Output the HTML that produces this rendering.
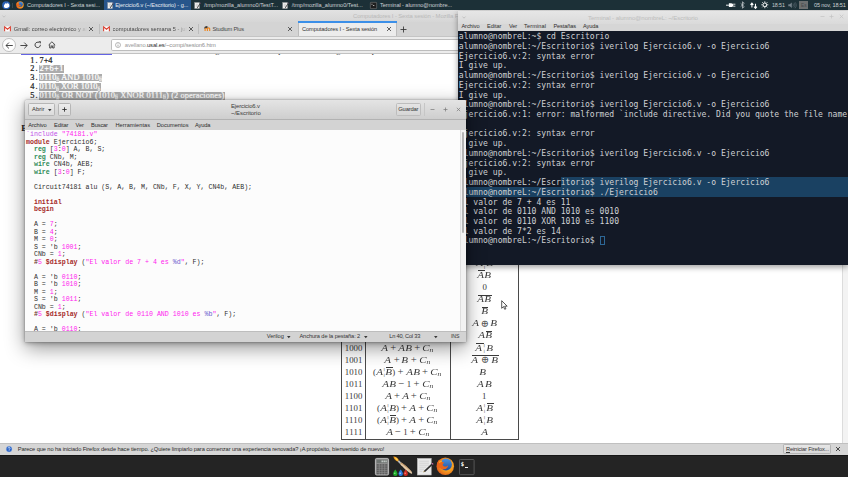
<!DOCTYPE html>
<html lang="es">
<head>
<meta charset="utf-8">
<title>Escritorio</title>
<style>
*{box-sizing:border-box;margin:0;padding:0}
html,body{width:848px;height:477px;overflow:hidden;background:#fff}
body{position:relative;font-family:"Liberation Sans","DejaVu Sans",sans-serif;font-size:6px;color:#333}
.abs{position:absolute}
span,div{white-space:nowrap}
svg{display:block;overflow:visible}
#panel{left:0;top:0;width:848px;height:10.2px;background:#1c3037}
.fade{-webkit-mask-image:linear-gradient(90deg,#000 82%,transparent 100%);mask-image:linear-gradient(90deg,#000 82%,transparent 100%)}
#termtxt{font-family:"DejaVu Sans Mono","Liberation Mono",monospace;font-size:8.07px;line-height:9.73px;color:#cfd1d4}
#termtxt div{height:9.73px;white-space:pre}

.hle{display:inline-block;width:287.3px;height:9.73px;vertical-align:top}
.cur{display:inline-block;width:5px;height:9.3px;border:.8px solid #2d6796;vertical-align:top;margin-top:-.6px}
#gcode{overflow:hidden;padding:.3px 0 0 1.2px;font-family:"Liberation Mono","DejaVu Sans Mono",monospace;font-size:6.62px;line-height:7.52px;color:#2e2e2e;background:#fcfcfc}
#gcode div{height:7.52px;white-space:pre}
.k{color:#a52a2a}.ty{color:#2e8b57}.n,.s{color:#ff22ee}.p{color:#6a5acd}.pp{color:#c050e8}.h{color:#6b3a2a}
.mth{word-spacing:-.3px}
.mth i{font-style:italic;display:inline-block;transform:scaleX(1.26);margin:0 .68px}
.op{font-size:10.6px;line-height:0;position:relative;top:.55px}
.op2{font-size:9.8px;line-height:0;position:relative;top:.35px;color:#555}
.sn{font-size:6px;vertical-align:-1.6px;line-height:0}
.bb{color:#777;font-style:normal;position:relative;top:.3px;font-size:9.6px;line-height:0}
.ov{position:relative;display:inline-block;line-height:9px}
.ov::before{content:"";position:absolute;left:.6px;right:-.4px;top:-.9px;height:.6px;background:#3a3a3a}
</style>
</head>
<body>
<div class="abs " style="left:0.00px;top:10.00px;width:848.00px;height:12.00px;background:linear-gradient(#e2e2e2,#d6d6d6)"></div><svg class="abs" style="left:2.30px;top:14.80px;" width="4.00" height="3.00" viewBox="0 0 4 3"><path d="M.5 .6 2 2.200 3.500 .6" fill="none" stroke="#b9b9b9" stroke-width=".7"/></svg><span id="t1" class="abs " style="left:353.00px;top:12.86px;font-size:5.90px;line-height:7.67px;height:7.67px;color:#b9b9b9;letter-spacing:-0.110px;">Computadores I - Sexta sesión - Mozilla Firefox</span><div class="abs " style="left:0.00px;top:21.50px;width:848.00px;height:14.20px;background:#d4d4d4"></div><svg class="abs" style="left:3.80px;top:26.20px;" width="7.00" height="5.60" viewBox="0 0 10 8"><rect x=".3" y=".3" width="9.400" height="7.400" rx=".6" fill="#fff" stroke="#d9d3d0" stroke-width=".4"/><path d="M.9 7.600V1.200L5 4.600 9.100 1.200V7.600" fill="none" stroke="#d93a2b" stroke-width="1.500" stroke-linejoin="miter"/></svg><span id="t2" class="abs fade" style="left:13.80px;top:25.99px;font-size:5.70px;line-height:7.41px;height:7.41px;color:#464646;letter-spacing:-0.023px;">Gmail: correo electrónico y al</span><svg class="abs" style="left:88.40px;top:26.10px;" width="6.00" height="6.00" viewBox="0 0 6 6"><path d="M1 1 L5 5 M5 1 L1 5" stroke="#3c3c3c" stroke-width="0.8"/></svg><div class="abs " style="left:99.20px;top:23.60px;width:0.70px;height:10.40px;background:#bdbdbd"></div><svg class="abs" style="left:103.40px;top:26.20px;" width="7.00" height="5.60" viewBox="0 0 10 8"><rect x=".3" y=".3" width="9.400" height="7.400" rx=".6" fill="#fff" stroke="#d9d3d0" stroke-width=".4"/><path d="M.9 7.600V1.200L5 4.600 9.100 1.200V7.600" fill="none" stroke="#d93a2b" stroke-width="1.500" stroke-linejoin="miter"/></svg><span id="t3" class="abs fade" style="left:112.60px;top:25.99px;font-size:5.70px;line-height:7.41px;height:7.41px;color:#464646;letter-spacing:0.033px;">computadores semana 5 - jul</span><svg class="abs" style="left:187.80px;top:26.10px;" width="6.00" height="6.00" viewBox="0 0 6 6"><path d="M1 1 L5 5 M5 1 L1 5" stroke="#3c3c3c" stroke-width="0.8"/></svg><div class="abs " style="left:198.30px;top:23.60px;width:0.70px;height:10.40px;background:#bdbdbd"></div><svg class="abs" style="left:203.60px;top:26.30px;" width="6.80" height="5.40" viewBox="0 0 6.800 5.400"><path d="M1.100 5V3a1.150 1.150 0 0 1 2.300 0V5M3.400 3a1.150 1.150 0 0 1 2.300 0V5" fill="none" stroke="#f0861c" stroke-width="1.150"/><path d="M0 1.300 2.300 .1 4.300 1 2.100 2.300Z" fill="#3d3630"/><path d="M.5 1.500V3" stroke="#3d3630" stroke-width=".4"/></svg><span id="t4" class="abs " style="left:212.50px;top:25.99px;font-size:5.70px;line-height:7.41px;height:7.41px;color:#464646;letter-spacing:-0.183px;">Studium Plus</span><svg class="abs" style="left:287.00px;top:26.10px;" width="6.00" height="6.00" viewBox="0 0 6 6"><path d="M1 1 L5 5 M5 1 L1 5" stroke="#3c3c3c" stroke-width="0.8"/></svg><div class="abs " style="left:0.00px;top:35.60px;width:848.00px;height:18.00px;background:#ececec;border-top:.6px solid #c4c4c4;border-bottom:.8px solid #c2c2c2"></div><div class="abs " style="left:297.80px;top:21.50px;width:99.20px;height:14.80px;background:#ececec;border-left:.6px solid #bcbcbc;border-right:.6px solid #bcbcbc"></div><div class="abs " style="left:297.80px;top:21.40px;width:99.20px;height:1.50px;background:#3b8fe8"></div><span id="t5" class="abs " style="left:302.00px;top:25.99px;font-size:5.70px;line-height:7.41px;height:7.41px;color:#333;letter-spacing:-0.103px;">Computadores I - Sexta sesión</span><svg class="abs" style="left:386.00px;top:26.10px;" width="6.00" height="6.00" viewBox="0 0 6 6"><path d="M1 1 L5 5 M5 1 L1 5" stroke="#3c3c3c" stroke-width="0.8"/></svg><svg class="abs" style="left:400.20px;top:25.60px;" width="7.00" height="7.00" viewBox="0 0 7 7"><path d="M3.500 .5V6.500M.5 3.500H6.500" stroke="#333" stroke-width=".85"/></svg><div class="abs " style="left:1.80px;top:37.90px;width:14.20px;height:14.20px;background:#fdfdfd;border:.7px solid #c0c0c0;border-radius:50%"></div><svg class="abs" style="left:4.80px;top:41.50px;" width="8.20" height="7.00" viewBox="0 0 8.2 7"><path d="M7.800 3.500H1M3.900 .6 1 3.500 3.900 6.400" fill="none" stroke="#3e3e3e" stroke-width=".95"/></svg><svg class="abs" style="left:19.80px;top:41.50px;" width="8.20" height="7.00" viewBox="0 0 8.2 7"><path d="M.4 3.500H7.200M4.300 .6 7.200 3.500 4.300 6.400" fill="none" stroke="#3e3e3e" stroke-width=".95"/></svg><svg class="abs" style="left:34.00px;top:41.30px;" width="7.60" height="7.60" viewBox="0 0 7.6 7.6"><path d="M6.400 3.800A2.700 2.700 0 1 1 5.300 1.700" fill="none" stroke="#3e3e3e" stroke-width=".95"/><path d="M4.300 .2H6.800V2.700Z" fill="#3e3e3e"/></svg><svg class="abs" style="left:47.80px;top:41.20px;" width="7.80" height="7.60" viewBox="0 0 7.8 7.6"><path d="M.6 4 3.900 .8 7.200 4M1.700 3.400V7H3.200V4.900H4.600V7H6.100V3.400" fill="none" stroke="#3e3e3e" stroke-width=".9"/></svg><div class="abs " style="left:110.50px;top:38.90px;width:600.00px;height:12.50px;background:#fff;border:.7px solid #bdbdbd;border-radius:1.800px"></div><svg class="abs" style="left:114.60px;top:42.00px;" width="6.00" height="6.00" viewBox="0 0 6 6"><circle cx="3" cy="3" r="2.500" fill="none" stroke="#8a8a8a" stroke-width=".6"/><path d="M3 2.600V4.500M3 1.500V2" stroke="#8a8a8a" stroke-width=".7"/></svg><span id="t6" class="abs " style="left:124.80px;top:41.93px;font-size:5.80px;line-height:7.54px;height:7.54px;letter-spacing:-0.112px;"><span style="color:#9a9a9a">avellano.</span><span style="color:#2a2a2a">usal.es</span><span style="color:#8e8e8e">/~compi/sesion6.htm</span></span>
<div class="abs " style="left:0.00px;top:53.60px;width:848.00px;height:389.20px;background:#fff"></div><div class="abs" style="left:0;top:54.200px;width:848px;height:5px;overflow:hidden"><span id="t7" class="abs " style="left:215.30px;top:-7.90px;font-size:8.30px;line-height:9.20px;height:9.20px;color:#222;font-family:'Liberation Serif','DejaVu Serif',serif;">general</span><span id="t8" class="abs " style="left:278.20px;top:-7.90px;font-size:8.30px;line-height:9.20px;height:9.20px;color:#222;font-family:'Liberation Serif','DejaVu Serif',serif;">para</span><span id="t9" class="abs " style="left:336.30px;top:-7.90px;font-size:8.30px;line-height:9.20px;height:9.20px;color:#222;font-family:'Liberation Serif','DejaVu Serif',serif;">grandes</span><span id="t10" class="abs " style="left:371.70px;top:-7.90px;font-size:8.30px;line-height:9.20px;height:9.20px;color:#222;font-family:'Liberation Serif','DejaVu Serif',serif;">paso</span></div><div class="abs " style="left:21.00px;top:53.80px;width:90.60px;height:1.00px;background:#6464e4"></div><span id="t11" class="abs " style="left:30.30px;top:56.50px;font-size:8.30px;line-height:8.00px;height:8.00px;color:#222;font-family:'Liberation Serif','DejaVu Serif',serif;letter-spacing:1.066px;-webkit-text-stroke:.22px;">1.</span><span id="t12" class="abs " style="left:39.30px;top:56.50px;font-size:8.30px;line-height:8.00px;height:8.00px;color:#1a1a1a;font-family:'Liberation Serif','DejaVu Serif',serif;letter-spacing:-0.039px;"><span style="display:inline-block;height:7.900px;line-height:7.900px;padding:0 .3px;-webkit-text-stroke:.22px;">7+4</span></span><span id="t13" class="abs " style="left:30.30px;top:65.00px;font-size:8.30px;line-height:8.00px;height:8.00px;color:#222;font-family:'Liberation Serif','DejaVu Serif',serif;letter-spacing:1.066px;-webkit-text-stroke:.22px;">2.</span><span id="t14" class="abs " style="left:39.30px;top:65.00px;font-size:8.30px;line-height:8.00px;height:8.00px;color:#1a1a1a;font-family:'Liberation Serif','DejaVu Serif',serif;letter-spacing:0.498px;"><span style="display:inline-block;height:7.900px;line-height:7.900px;padding:0 .3px;-webkit-text-stroke:.22px;background:#acacac;color:#fff">2+6+1</span></span><span id="t15" class="abs " style="left:30.30px;top:73.50px;font-size:8.30px;line-height:8.00px;height:8.00px;color:#222;font-family:'Liberation Serif','DejaVu Serif',serif;letter-spacing:1.066px;-webkit-text-stroke:.22px;">3.</span><span id="t16" class="abs " style="left:39.30px;top:73.50px;font-size:8.30px;line-height:8.00px;height:8.00px;color:#1a1a1a;font-family:'Liberation Serif','DejaVu Serif',serif;letter-spacing:0.138px;"><span style="display:inline-block;height:7.900px;line-height:7.900px;padding:0 .3px;-webkit-text-stroke:.22px;background:#acacac;color:#fff">0110<sub style="font-size:5.800px;vertical-align:-1.500px;line-height:0;background:#c6c6c6;-webkit-text-stroke:0">b</sub> AND 1010<sub style="font-size:5.800px;vertical-align:-1.500px;line-height:0;background:#c6c6c6;-webkit-text-stroke:0">b</sub></span></span><span id="t17" class="abs " style="left:30.30px;top:83.40px;font-size:8.30px;line-height:8.00px;height:8.00px;color:#222;font-family:'Liberation Serif','DejaVu Serif',serif;letter-spacing:1.066px;-webkit-text-stroke:.22px;">4.</span><span id="t18" class="abs " style="left:39.30px;top:83.40px;font-size:8.30px;line-height:8.00px;height:8.00px;color:#1a1a1a;font-family:'Liberation Serif','DejaVu Serif',serif;letter-spacing:0.031px;"><span style="display:inline-block;height:7.900px;line-height:7.900px;padding:0 .3px;-webkit-text-stroke:.22px;background:#acacac;color:#fff">0110<sub style="font-size:5.800px;vertical-align:-1.500px;line-height:0;background:#c6c6c6;-webkit-text-stroke:0">b</sub> XOR 1010<sub style="font-size:5.800px;vertical-align:-1.500px;line-height:0;background:#c6c6c6;-webkit-text-stroke:0">b</sub></span></span><span id="t19" class="abs " style="left:30.30px;top:91.90px;font-size:8.30px;line-height:8.00px;height:8.00px;color:#222;font-family:'Liberation Serif','DejaVu Serif',serif;letter-spacing:1.066px;-webkit-text-stroke:.22px;">5.</span><span id="t20" class="abs " style="left:39.30px;top:91.90px;font-size:8.30px;line-height:8.00px;height:8.00px;color:#1a1a1a;font-family:'Liberation Serif','DejaVu Serif',serif;letter-spacing:0.126px;"><span style="display:inline-block;height:7.900px;line-height:7.900px;padding:0 .3px;-webkit-text-stroke:.22px;background:#acacac;color:#fff">0110<sub style="font-size:5.800px;vertical-align:-1.500px;line-height:0;background:#c6c6c6;-webkit-text-stroke:0">b</sub> OR NOT (1010<sub style="font-size:5.800px;vertical-align:-1.500px;line-height:0;background:#c6c6c6;-webkit-text-stroke:0">b</sub> XNOR 0111<sub style="font-size:5.800px;vertical-align:-1.500px;line-height:0;background:#c6c6c6;-webkit-text-stroke:0">b</sub>) (2 operaciones)</span></span><span id="t21" class="abs " style="left:21.20px;top:123.18px;font-size:8.80px;line-height:11.44px;height:11.44px;color:#222;font-family:'Liberation Serif','DejaVu Serif',serif;font-weight:bold;letter-spacing:0.066px;">Ejercicio 6</span><div class="abs " style="left:841.60px;top:53.60px;width:6.40px;height:389.20px;background:#f3f3f3;border-left:.7px solid #dcdcdc"></div>
<div class="abs " style="left:341.40px;top:200.00px;width:0.75px;height:239.40px;background:#4a4a4a"></div><div class="abs " style="left:365.40px;top:200.00px;width:0.75px;height:239.40px;background:#4a4a4a"></div><div class="abs " style="left:450.10px;top:200.00px;width:0.75px;height:239.40px;background:#4a4a4a"></div><div class="abs " style="left:518.20px;top:200.00px;width:0.75px;height:239.40px;background:#4a4a4a"></div><div class="abs " style="left:341.40px;top:438.70px;width:177.50px;height:0.75px;background:#4a4a4a"></div><span id="t22" class="abs " style="left:344.80px;top:343.50px;font-size:8.80px;line-height:9.00px;height:9.00px;color:#3a3a3a;font-family:'Liberation Serif','DejaVu Serif',serif;letter-spacing:-0.031px;">1000</span><span id="t23" class="abs " style="left:344.80px;top:355.52px;font-size:8.80px;line-height:9.00px;height:9.00px;color:#3a3a3a;font-family:'Liberation Serif','DejaVu Serif',serif;letter-spacing:-0.031px;">1001</span><span id="t24" class="abs " style="left:344.80px;top:367.54px;font-size:8.80px;line-height:9.00px;height:9.00px;color:#3a3a3a;font-family:'Liberation Serif','DejaVu Serif',serif;letter-spacing:-0.031px;">1010</span><span id="t25" class="abs " style="left:344.80px;top:379.56px;font-size:8.80px;line-height:9.00px;height:9.00px;color:#3a3a3a;font-family:'Liberation Serif','DejaVu Serif',serif;letter-spacing:0.073px;">1011</span><span id="t26" class="abs " style="left:344.80px;top:391.58px;font-size:8.80px;line-height:9.00px;height:9.00px;color:#3a3a3a;font-family:'Liberation Serif','DejaVu Serif',serif;letter-spacing:0.073px;">1100</span><span id="t27" class="abs " style="left:344.80px;top:403.60px;font-size:8.80px;line-height:9.00px;height:9.00px;color:#3a3a3a;font-family:'Liberation Serif','DejaVu Serif',serif;letter-spacing:0.073px;">1101</span><span id="t28" class="abs " style="left:344.80px;top:415.62px;font-size:8.80px;line-height:9.00px;height:9.00px;color:#3a3a3a;font-family:'Liberation Serif','DejaVu Serif',serif;letter-spacing:0.182px;">1110</span><span id="t29" class="abs " style="left:344.80px;top:427.64px;font-size:8.80px;line-height:9.00px;height:9.00px;color:#3a3a3a;font-family:'Liberation Serif','DejaVu Serif',serif;letter-spacing:0.292px;">1111</span><span id="t30" class="abs mth" style="left:381.30px;top:343.50px;font-size:8.80px;line-height:9.00px;height:9.00px;color:#3a3a3a;font-family:'Liberation Serif','DejaVu Serif',serif;letter-spacing:0.139px;"><i>A</i> <span class="op">+</span> <i>A</i><i>B</i> <span class="op">+</span> <i>C</i><sub class="sn"><i>n</i></sub></span><span id="t31" class="abs mth" style="left:384.80px;top:355.52px;font-size:8.80px;line-height:9.00px;height:9.00px;color:#3a3a3a;font-family:'Liberation Serif','DejaVu Serif',serif;letter-spacing:0.123px;"><i>A</i> <span class="op">+</span> <i>B</i> <span class="op">+</span> <i>C</i><sub class="sn"><i>n</i></sub></span><span id="t32" class="abs mth" style="left:373.00px;top:367.54px;font-size:8.80px;line-height:9.00px;height:9.00px;color:#3a3a3a;font-family:'Liberation Serif','DejaVu Serif',serif;letter-spacing:0.227px;">(<i>A</i><span class="bb">¦</span><span class="ov"><i>B</i></span>) <span class="op">+</span> <i>A</i><i>B</i> <span class="op">+</span> <i>C</i><sub class="sn"><i>n</i></sub></span><span id="t33" class="abs mth" style="left:382.40px;top:379.56px;font-size:8.80px;line-height:9.00px;height:9.00px;color:#3a3a3a;font-family:'Liberation Serif','DejaVu Serif',serif;letter-spacing:0.222px;"><i>A</i><i>B</i> <span class="op">−</span> 1 <span class="op">+</span> <i>C</i><sub class="sn"><i>n</i></sub></span><span id="t34" class="abs mth" style="left:385.20px;top:391.58px;font-size:8.80px;line-height:9.00px;height:9.00px;color:#3a3a3a;font-family:'Liberation Serif','DejaVu Serif',serif;letter-spacing:0.078px;"><i>A</i> <span class="op">+</span> <i>A</i> <span class="op">+</span> <i>C</i><sub class="sn"><i>n</i></sub></span><span id="t35" class="abs mth" style="left:377.00px;top:403.60px;font-size:8.80px;line-height:9.00px;height:9.00px;color:#3a3a3a;font-family:'Liberation Serif','DejaVu Serif',serif;letter-spacing:0.153px;">(<i>A</i><span class="bb">¦</span><i>B</i>) <span class="op">+</span> <i>A</i> <span class="op">+</span> <i>C</i><sub class="sn"><i>n</i></sub></span><span id="t36" class="abs mth" style="left:377.00px;top:415.62px;font-size:8.80px;line-height:9.00px;height:9.00px;color:#3a3a3a;font-family:'Liberation Serif','DejaVu Serif',serif;letter-spacing:0.153px;">(<i>A</i><span class="bb">¦</span><span class="ov"><i>B</i></span>) <span class="op">+</span> <i>A</i> <span class="op">+</span> <i>C</i><sub class="sn"><i>n</i></sub></span><span id="t37" class="abs mth" style="left:386.20px;top:427.64px;font-size:8.80px;line-height:9.00px;height:9.00px;color:#3a3a3a;font-family:'Liberation Serif','DejaVu Serif',serif;letter-spacing:0.126px;"><i>A</i> <span class="op">−</span> 1 <span class="op">+</span> <i>C</i><sub class="sn"><i>n</i></sub></span><span id="t38" class="abs mth" style="left:476.20px;top:259.36px;font-size:8.80px;line-height:9.00px;height:9.00px;color:#3a3a3a;font-family:'Liberation Serif','DejaVu Serif',serif;letter-spacing:0.570px;"><i>A</i><span class="bb">¦</span><span class="ov"><i>B</i></span></span><span id="t39" class="abs mth" style="left:477.70px;top:271.38px;font-size:8.80px;line-height:9.00px;height:9.00px;color:#3a3a3a;font-family:'Liberation Serif','DejaVu Serif',serif;letter-spacing:0.163px;"><span class="ov"><i>A</i></span><i>B</i></span><span id="t40" class="abs mth" style="left:482.50px;top:283.40px;font-size:8.80px;line-height:9.00px;height:9.00px;color:#3a3a3a;font-family:'Liberation Serif','DejaVu Serif',serif;">0</span><span id="t41" class="abs mth" style="left:477.70px;top:295.42px;font-size:8.80px;line-height:9.00px;height:9.00px;color:#3a3a3a;font-family:'Liberation Serif','DejaVu Serif',serif;letter-spacing:0.163px;"><span class="ov"><i>A</i><i>B</i></span></span><span id="t42" class="abs mth" style="left:481.00px;top:307.44px;font-size:8.80px;line-height:9.00px;height:9.00px;color:#3a3a3a;font-family:'Liberation Serif','DejaVu Serif',serif;"><span class="ov"><i>B</i></span></span><span id="t43" class="abs mth" style="left:472.00px;top:319.46px;font-size:8.80px;line-height:9.00px;height:9.00px;color:#3a3a3a;font-family:'Liberation Serif','DejaVu Serif',serif;letter-spacing:-0.117px;"><i>A</i> <span class="op2">⊕</span> <i>B</i></span><span id="t44" class="abs mth" style="left:478.30px;top:331.48px;font-size:8.80px;line-height:9.00px;height:9.00px;color:#3a3a3a;font-family:'Liberation Serif','DejaVu Serif',serif;letter-spacing:0.162px;"><i>A</i><span class="ov"><i>B</i></span></span><span id="t45" class="abs mth" style="left:475.80px;top:343.50px;font-size:8.80px;line-height:9.00px;height:9.00px;color:#3a3a3a;font-family:'Liberation Serif','DejaVu Serif',serif;letter-spacing:0.770px;"><span class="ov"><i>A</i></span><span class="bb">¦</span><i>B</i></span><span id="t46" class="abs mth" style="left:471.50px;top:355.52px;font-size:8.80px;line-height:9.00px;height:9.00px;color:#3a3a3a;font-family:'Liberation Serif','DejaVu Serif',serif;letter-spacing:0.258px;"><span class="ov"><i>A</i> <span class="op2">⊕</span> <i>B</i></span></span><span id="t47" class="abs mth" style="left:479.80px;top:367.54px;font-size:8.80px;line-height:9.00px;height:9.00px;color:#3a3a3a;font-family:'Liberation Serif','DejaVu Serif',serif;"><i>B</i></span><span id="t48" class="abs mth" style="left:477.40px;top:379.56px;font-size:8.80px;line-height:9.00px;height:9.00px;color:#3a3a3a;font-family:'Liberation Serif','DejaVu Serif',serif;letter-spacing:1.463px;"><i>A</i><i>B</i></span><span id="t49" class="abs mth" style="left:482.00px;top:391.58px;font-size:8.80px;line-height:9.00px;height:9.00px;color:#3a3a3a;font-family:'Liberation Serif','DejaVu Serif',serif;">1</span><span id="t50" class="abs mth" style="left:476.20px;top:403.60px;font-size:8.80px;line-height:9.00px;height:9.00px;color:#3a3a3a;font-family:'Liberation Serif','DejaVu Serif',serif;letter-spacing:0.570px;"><i>A</i><span class="bb">¦</span><span class="ov"><i>B</i></span></span><span id="t51" class="abs mth" style="left:476.20px;top:415.62px;font-size:8.80px;line-height:9.00px;height:9.00px;color:#3a3a3a;font-family:'Liberation Serif','DejaVu Serif',serif;letter-spacing:0.570px;"><i>A</i><span class="bb">¦</span><i>B</i></span><span id="t52" class="abs mth" style="left:481.00px;top:427.64px;font-size:8.80px;line-height:9.00px;height:9.00px;color:#3a3a3a;font-family:'Liberation Serif','DejaVu Serif',serif;"><i>A</i></span>
<div class="abs " style="left:0.00px;top:442.80px;width:848.00px;height:12.40px;background:#d6d6d6;border-top:.7px solid #c0c0c0"></div><svg class="abs" style="left:5.70px;top:446.00px;" width="6.20" height="6.20" viewBox="0 0 10 10"><circle cx="5" cy="5" r="4.700" fill="#2a64c8" stroke="#9cb8e6" stroke-width=".6"/><path d="M3.500 3.800C3.500 2.800 4.200 2.300 5 2.300s1.600.5 1.600 1.400c0 1.100-1.500 1.200-1.500 2.400M5.100 7.200v.9" fill="none" stroke="#fff" stroke-width="1.100"/></svg><span id="t53" class="abs " style="left:17.70px;top:445.90px;font-size:5.70px;line-height:7.41px;height:7.41px;color:#2b2b2b;letter-spacing:-0.090px;">Parece que no ha iniciado Firefox desde hace tiempo. ¿Quiere limpiarlo para comenzar una experiencia renovada? ¡A propósito, bienvenido de nuevo!</span><div class="abs " style="left:782.90px;top:444.40px;width:48.40px;height:9.40px;background:linear-gradient(#e6e6e6,#d9d9d9);border:.6px solid #b4b4b4;border-radius:1.200px"></div><span id="t54" class="abs " style="left:786.00px;top:445.90px;font-size:5.70px;line-height:7.41px;height:7.41px;color:#333;letter-spacing:-0.144px;"><u>R</u>einiciar Firefox...</span><svg class="abs" style="left:835.00px;top:446.20px;" width="6.00" height="6.00" viewBox="0 0 6 6"><path d="M1 1 L5 5 M5 1 L1 5" stroke="#2e2e2e" stroke-width="0.85"/></svg>
<svg class="abs" style="left:500.80px;top:300.30px;" width="7.00" height="10.00" viewBox="0 0 7 10"><path d="M.7 .7V8.300L2.500 6.600 3.700 9.300 4.900 8.800 3.700 6.200H6.200Z" fill="#fff" stroke="#111" stroke-width=".7" stroke-linejoin="round"/></svg>
<div class="abs " style="left:458.20px;top:11.10px;width:390.00px;height:253.90px;background:#131926;box-shadow:0 1.500px 6px rgba(0,0,0,.4)"></div><div class="abs " style="left:458.20px;top:11.10px;width:390.00px;height:13.20px;background:linear-gradient(#e6e6e6,#dadada)"></div><svg class="abs" style="left:462.30px;top:15.60px;" width="4.00" height="3.00" viewBox="0 0 4 3"><path d="M.5 .6 2 2.200 3.500 .6" fill="none" stroke="#b5b5b5" stroke-width=".7"/></svg><span id="t55" class="abs " style="left:588.00px;top:13.64px;font-size:6.10px;line-height:7.93px;height:7.93px;color:#bdbdbd;letter-spacing:-0.071px;">Terminal - alumno@nombreL: ~/Escritorio</span><svg class="abs" style="left:819.50px;top:14.00px;" width="5.00" height="5.00" viewBox="0 0 5 5"><path d="M.5 2.500H4.500" stroke="#c3c3c3" stroke-width=".7"/></svg><svg class="abs" style="left:829.00px;top:14.00px;" width="5.00" height="5.00" viewBox="0 0 5 5"><path d="M.5 2.500H4.500M2.500 .5V4.500" stroke="#c3c3c3" stroke-width=".7"/></svg><svg class="abs" style="left:838.60px;top:14.00px;" width="5.00" height="5.00" viewBox="0 0 5 5"><path d="M.7 .7 4.300 4.300M4.300 .7.7 4.300" stroke="#c3c3c3" stroke-width=".7"/></svg><div class="abs " style="left:458.20px;top:24.20px;width:390.00px;height:7.00px;background:#d6d6d6"></div><span id="t56" class="abs " style="left:461.50px;top:23.46px;font-size:5.60px;line-height:7.28px;height:7.28px;color:#2d2d2d;letter-spacing:-0.109px;">Archivo</span><span id="t57" class="abs " style="left:487.00px;top:23.46px;font-size:5.60px;line-height:7.28px;height:7.28px;color:#2d2d2d;letter-spacing:-0.025px;">Editar</span><span id="t58" class="abs " style="left:509.00px;top:23.46px;font-size:5.60px;line-height:7.28px;height:7.28px;color:#2d2d2d;letter-spacing:-0.203px;">Ver</span><span id="t59" class="abs " style="left:524.00px;top:23.46px;font-size:5.60px;line-height:7.28px;height:7.28px;color:#2d2d2d;letter-spacing:0.123px;">Terminal</span><span id="t60" class="abs " style="left:553.50px;top:23.46px;font-size:5.60px;line-height:7.28px;height:7.28px;color:#2d2d2d;letter-spacing:-0.118px;">Pestañas</span><span id="t61" class="abs " style="left:583.00px;top:23.46px;font-size:5.60px;line-height:7.28px;height:7.28px;color:#2d2d2d;letter-spacing:-0.116px;">Ayuda</span><div class="abs " style="left:560.90px;top:177.20px;width:287.30px;height:9.90px;background:#1a4162"></div><div class="abs " style="left:458.20px;top:186.90px;width:390.00px;height:9.90px;background:#1a4162"></div><div id="termtxt" class="abs" style="left:458.800px;top:32.300px;width:389px"><div>alumno@nombreL:~$ cd Escritorio</div><div>alumno@nombreL:~/Escritorio$ iverilog Ejercicio6.v -o Ejercicio6</div><div>Ejercicio6.v:2: syntax error</div><div>I give up.</div><div>alumno@nombreL:~/Escritorio$ iverilog Ejercicio6.v -o Ejercicio6</div><div>Ejercicio6.v:2: syntax error</div><div>I give up.</div><div>alumno@nombreL:~/Escritorio$ iverilog Ejercicio6.v -o Ejercicio6</div><div>Ejercicio6.v:1: error: malformed `include directive. Did you quote the file name</div><div>?</div><div>Ejercicio6.v:2: syntax error</div><div>I give up.</div><div>alumno@nombreL:~/Escritorio$ iverilog Ejercicio6.v -o Ejercicio6</div><div>Ejercicio6.v:2: syntax error</div><div>I give up.</div><div>alumno@nombreL:~/Escritorio$ iverilog Ejercicio6.v -o Ejercicio6</div><div>alumno@nombreL:~/Escritorio$ ./Ejercicio6</div><div>El valor de 7 + 4 es 11</div><div>El valor de 0110 AND 1010 es 0010</div><div>El valor de 0110 XOR 1010 es 1100</div><div>El valor de 7*2 es 14</div><div>alumno@nombreL:~/Escritorio$ <span class="cur"></span></div></div>
<div class="abs " style="left:24.80px;top:99.80px;width:441.50px;height:242.00px;background:#fcfcfc;box-shadow:0 6px 20px rgba(0,0,0,.42),0 1px 5px rgba(0,0,0,.3),0 0 1.200px rgba(0,0,0,.55);border-radius:1.500px 1.500px 0 0"></div><div class="abs " style="left:24.80px;top:99.80px;width:441.50px;height:19.80px;background:linear-gradient(#e4e4e4,#cecece);border-bottom:.7px solid #b2b2b2;border-radius:1.500px 1.500px 0 0"></div><div class="abs " style="left:27.80px;top:103.20px;width:27.70px;height:12.90px;background:linear-gradient(#ececec,#dcdcdc);border:.7px solid #b6b6b6;border-radius:1.500px"></div><span id="t62" class="abs " style="left:32.00px;top:106.43px;font-size:5.80px;line-height:7.54px;height:7.54px;color:#333;letter-spacing:0.062px;">Abrir</span><svg class="abs" style="left:47.50px;top:108.90px;" width="3.60" height="2.20" viewBox="0 0 3.6 2.2"><path d="M0 0H3.600L1.800 2.200Z" fill="#3a3a3a"/></svg><div class="abs " style="left:58.40px;top:103.20px;width:12.90px;height:12.90px;background:linear-gradient(#ececec,#dcdcdc);border:.7px solid #b6b6b6;border-radius:1.500px"></div><svg class="abs" style="left:62.30px;top:107.10px;" width="5.00" height="5.00" viewBox="0 0 5 5"><path d="M2.500 .3V4.700M.3 2.500H4.700" stroke="#333" stroke-width=".9"/></svg><span id="t63" class="abs " style="left:231.00px;top:102.87px;font-size:5.90px;line-height:7.67px;height:7.67px;color:#3a3a3a;letter-spacing:-0.102px;">Ejercicio6.v</span><span id="t64" class="abs " style="left:231.00px;top:110.07px;font-size:5.90px;line-height:7.67px;height:7.67px;color:#3a3a3a;letter-spacing:0.005px;">~/Escritorio</span><div class="abs " style="left:395.70px;top:102.80px;width:25.00px;height:13.30px;background:linear-gradient(#e4e4e4,#d6d6d6);border:.7px solid #bdbdbd;border-radius:1.500px"></div><span id="t65" class="abs " style="left:398.30px;top:106.33px;font-size:5.80px;line-height:7.54px;height:7.54px;color:#333;letter-spacing:-0.194px;">Guardar</span><div class="abs " style="left:424.00px;top:103.00px;width:0.60px;height:13.00px;background:#c6c6c6"></div><svg class="abs" style="left:429.50px;top:107.00px;" width="5.00" height="5.00" viewBox="0 0 5 5"><path d="M.5 2.500H4.500" stroke="#7d7d7d" stroke-width=".75"/></svg><svg class="abs" style="left:442.60px;top:107.00px;" width="5.00" height="5.00" viewBox="0 0 5 5"><path d="M.5 2.500H4.500M2.500 .5V4.500" stroke="#7d7d7d" stroke-width=".75"/></svg><svg class="abs" style="left:455.90px;top:106.80px;" width="5.00" height="5.00" viewBox="0 0 5 5"><path d="M.8 .8 4.200 4.200M4.200 .8.8 4.200" stroke="#7d7d7d" stroke-width=".75"/></svg><div class="abs " style="left:24.80px;top:119.60px;width:441.50px;height:10.50px;background:#d3d3d3"></div><span id="t66" class="abs " style="left:28.20px;top:121.59px;font-size:5.70px;line-height:7.41px;height:7.41px;color:#2c2c2c;letter-spacing:-0.061px;">Archivo</span><span id="t67" class="abs " style="left:54.00px;top:121.59px;font-size:5.70px;line-height:7.41px;height:7.41px;color:#2c2c2c;letter-spacing:-0.072px;">Editar</span><span id="t68" class="abs " style="left:75.50px;top:121.59px;font-size:5.70px;line-height:7.41px;height:7.41px;color:#2c2c2c;letter-spacing:-0.023px;">Ver</span><span id="t69" class="abs " style="left:91.00px;top:121.59px;font-size:5.70px;line-height:7.41px;height:7.41px;color:#2c2c2c;letter-spacing:-0.141px;">Buscar</span><span id="t70" class="abs " style="left:115.40px;top:121.59px;font-size:5.70px;line-height:7.41px;height:7.41px;color:#2c2c2c;letter-spacing:0.060px;">Herramientas</span><span id="t71" class="abs " style="left:156.70px;top:121.59px;font-size:5.70px;line-height:7.41px;height:7.41px;color:#2c2c2c;letter-spacing:-0.015px;">Documentos</span><span id="t72" class="abs " style="left:195.00px;top:121.59px;font-size:5.70px;line-height:7.41px;height:7.41px;color:#2c2c2c;letter-spacing:-0.133px;">Ayuda</span><div id="gcode" class="abs" style="left:24.80px;top:130.100px;width:441.50px;height:200.700px;padding-top:.9px"><div><span class="pp">`include</span> <span class="s">"74181.v"</span></div><div><b class="k">module</b> Ejercicio6;</div><div>  <b class="ty">reg</b> [<span class="n">3</span>:<span class="n">0</span>] A, B, S;</div><div>  <b class="ty">reg</b> CNb, M;</div><div>  <b class="ty">wire</b> CN4b, AEB;</div><div>  <b class="ty">wire</b> [<span class="n">3</span>:<span class="n">0</span>] F;</div><div></div><div>  Circuit74181 alu (S, A, B, M, CNb, F, X, Y, CN4b, AEB);</div><div></div><div>  <b class="k">initial</b></div><div>  <b class="k">begin</b></div><div></div><div>  A = <span class="n">7</span>;</div><div>  B = <span class="n">4</span>;</div><div>  M = <span class="n">0</span>;</div><div>  S = 'b <span class="n">1001</span>;</div><div>  CNb = <span class="n">1</span>;</div><div>  <b class="h">#</b><span class="n">5</span> <b class="k">$display</b> (<span class="s">"El valor de 7 + 4 es <span class="p">%d</span>"</span>, F);</div><div></div><div>  A = 'b <span class="n">0110</span>;</div><div>  B = 'b <span class="n">1010</span>;</div><div>  M = <span class="n">1</span>;</div><div>  S = 'b <span class="n">1011</span>;</div><div>  CNb = <span class="n">1</span>;</div><div>  <b class="h">#</b><span class="n">5</span> <b class="k">$display</b> (<span class="s">"El valor de 0110 AND 1010 es <span class="p">%b</span>"</span>, F);</div><div></div><div>  A = 'b <span class="n">0110</span>;</div></div><div class="abs " style="left:460.30px;top:130.10px;width:6.00px;height:200.70px;background:#f2f2f2;border-left:.6px solid #dedede"></div><div class="abs " style="left:461.80px;top:132.00px;width:2.60px;height:100.70px;background:#b3b3b3;border-radius:1.300px"></div><div class="abs " style="left:24.80px;top:330.80px;width:441.50px;height:11.00px;background:#d3d3d3;border-top:.7px solid #bdbdbd"></div><span id="t73" class="abs " style="left:266.80px;top:333.10px;font-size:5.70px;line-height:7.41px;height:7.41px;color:#333;letter-spacing:-0.065px;">Verilog</span><svg class="abs" style="left:286.80px;top:335.50px;" width="3.60" height="2.20" viewBox="0 0 3.6 2.2"><path d="M0 0H3.600L1.800 2.200Z" fill="#3a3a3a"/></svg><span id="t74" class="abs " style="left:299.40px;top:333.10px;font-size:5.70px;line-height:7.41px;height:7.41px;color:#333;letter-spacing:-0.102px;">Anchura de la pestaña: 2</span><svg class="abs" style="left:363.60px;top:335.50px;" width="3.60" height="2.20" viewBox="0 0 3.6 2.2"><path d="M0 0H3.600L1.800 2.200Z" fill="#3a3a3a"/></svg><span id="t75" class="abs " style="left:389.20px;top:333.10px;font-size:5.70px;line-height:7.41px;height:7.41px;color:#333;letter-spacing:-0.220px;">Ln 40, Col 33</span><svg class="abs" style="left:434.40px;top:335.50px;" width="3.60" height="2.20" viewBox="0 0 3.6 2.2"><path d="M0 0H3.600L1.800 2.200Z" fill="#3a3a3a"/></svg><span id="t76" class="abs " style="left:451.00px;top:333.42px;font-size:5.20px;line-height:6.76px;height:6.76px;color:#333;letter-spacing:-0.078px;">INS</span>
<div id="panel" class="abs"><svg class="abs" style="left:1.60px;top:0.60px;" width="8.40" height="8.40" viewBox="0 0 10 10"><circle cx="5" cy="5" r="4.8" fill="#2b62b4"/><path d="M2.300 6.800c-.2-1.500.4-2.700 1.300-3.200l.3-1.300.9.900c.5-.1 1-.1 1.500 0l.3-1.300.9 1.100c1 .6 1.400 1.700 1.300 3 0 1.300-1.400 2.200-3.300 2.200S2.400 8 2.300 6.800Z" fill="#fff"/></svg><div class="abs " style="left:12.30px;top:2.50px;width:0.60px;height:5.00px;background:#3a4950"></div><svg class="abs" style="left:16.30px;top:1.00px;" width="8.00" height="8.00" viewBox="0 0 20 20"><defs><radialGradient id="fgp" cx=".62" cy=".45" r=".75"><stop offset="0" stop-color="#ffd23c"/><stop offset=".45" stop-color="#f59a1e"/><stop offset="1" stop-color="#d9481a"/></radialGradient><linearGradient id="fbp" x1="0" y1="0" x2="0" y2="1"><stop offset="0" stop-color="#4a93e0"/><stop offset="1" stop-color="#1f4f9e"/></linearGradient></defs><circle cx="10" cy="10" r="9.4" fill="url(#fgp)"/><circle cx="10.7" cy="8" r="6.4" fill="url(#fbp)"/><path d="M1 8.200C1.200 6.200 2 4.500 3.200 3.300L3.600 5.100C4.500 4.200 5.600 3.800 6.700 3.900L6.100 5.400C7.300 5.300 8.300 5.700 9 6.500C7.900 6.800 7.300 7.400 7.200 8.200C7.100 9.300 8 10.100 9.300 10.300C10.900 10.500 12.200 10 13.100 9C13 11.400 11.100 13.200 8.600 13.300C6.900 13.400 5.400 12.700 4.400 11.600C3 12 1.800 11.400 1.300 10.300C1.100 9.600 1 8.900 1 8.200Z" fill="#e8641b"/><path d="M3.200 3.300 3.600 5.100C4.500 4.200 5.600 3.800 6.700 3.900L6.100 5.400C5 5.500 4 6 3.300 6.800C3 5.600 3 4.400 3.200 3.300Z" fill="#f7a823"/></svg><span id="t77" class="abs " style="left:27.00px;top:2.06px;font-size:5.60px;line-height:7.28px;height:7.28px;color:#ccd2d5;letter-spacing:-0.078px;">Computadores I - Sexta sesi...</span><div class="abs " style="left:104.00px;top:0.00px;width:87.00px;height:10.20px;background:#27558b"></div><svg class="abs" style="left:107.00px;top:1.60px;" width="7.00" height="7.00" viewBox="0 0 10.5 10"><rect x="1" y="0.5" width="7.2" height="9" fill="#f2f2f2" stroke="#9a9a9a" stroke-width=".5"/><path d="M2.5 3h4M2.5 4.6h4M2.5 6.2h2.5" stroke="#aaa" stroke-width=".6"/><path d="M9.3 1.2 L4.6 7.6 L4.2 9 L5.6 8.3 L10 2 Z" fill="#3b3b3b"/><path d="M9.3 1.2 L10 2 L10.4 1.2 L9.8 .7Z" fill="#e06ab0"/></svg><span id="t78" class="abs " style="left:115.20px;top:2.06px;font-size:5.60px;line-height:7.28px;height:7.28px;color:#e8edf2;letter-spacing:-0.050px;">Ejercicio6.v (~/Escritorio) - g...</span><svg class="abs" style="left:194.00px;top:1.60px;" width="7.00" height="7.00" viewBox="0 0 10.5 10"><rect x="1" y="0.5" width="7.2" height="9" fill="#f2f2f2" stroke="#9a9a9a" stroke-width=".5"/><path d="M2.5 3h4M2.5 4.6h4M2.5 6.2h2.5" stroke="#aaa" stroke-width=".6"/><path d="M9.3 1.2 L4.6 7.6 L4.2 9 L5.6 8.3 L10 2 Z" fill="#3b3b3b"/><path d="M9.3 1.2 L10 2 L10.4 1.2 L9.8 .7Z" fill="#e06ab0"/></svg><span id="t79" class="abs " style="left:204.00px;top:2.06px;font-size:5.60px;line-height:7.28px;height:7.28px;color:#ccd2d5;letter-spacing:0.011px;">/tmp/mozilla_alumno0/TestT...</span><svg class="abs" style="left:282.20px;top:1.60px;" width="7.00" height="7.00" viewBox="0 0 10.5 10"><rect x="1" y="0.5" width="7.2" height="9" fill="#f2f2f2" stroke="#9a9a9a" stroke-width=".5"/><path d="M2.5 3h4M2.5 4.6h4M2.5 6.2h2.5" stroke="#aaa" stroke-width=".6"/><path d="M9.3 1.2 L4.6 7.6 L4.2 9 L5.6 8.3 L10 2 Z" fill="#3b3b3b"/><path d="M9.3 1.2 L10 2 L10.4 1.2 L9.8 .7Z" fill="#e06ab0"/></svg><span id="t80" class="abs " style="left:291.80px;top:2.06px;font-size:5.60px;line-height:7.28px;height:7.28px;color:#ccd2d5;letter-spacing:0.004px;">/tmp/mozilla_alumno0/Test...</span><svg class="abs" style="left:370.20px;top:1.60px;" width="7.00" height="7.00" viewBox="0 0 10 10"><rect x=".5" y=".5" width="9" height="9" rx=".8" fill="#1e1e1e" stroke="#8a8a8a" stroke-width=".7"/><path d="M2 3.200h1.600M4.200 5h2" stroke="#fff" stroke-width=".9"/></svg><span id="t81" class="abs " style="left:380.00px;top:2.06px;font-size:5.60px;line-height:7.28px;height:7.28px;color:#ccd2d5;letter-spacing:-0.068px;">Terminal - alumno@nombre...</span><svg class="abs" style="left:725.80px;top:2.40px;" width="9.60" height="6.40" viewBox="0 0 9.600 6.400"><path d="M0 3.200h3" stroke="#fff" stroke-width=".9"/><path d="M2.900 1.300h2.300c1.200 0 2.100.850 2.100 1.900s-.9 1.900-2.100 1.900H2.900Z" fill="#fff"/><path d="M7.100 2.200h2.300M7.100 4.200h2.300" stroke="#fff" stroke-width=".8"/></svg><svg class="abs" style="left:739.80px;top:1.20px;" width="5.00" height="8.00" viewBox="0 0 5 8"><path d="M.7 2.400 4.200 5.600 2.500 7.300V.7L4.200 2.400.7 5.600" fill="none" stroke="#c4cacd" stroke-width=".75"/></svg><svg class="abs" style="left:749.70px;top:1.70px;" width="7.60" height="7.40" viewBox="0 0 7.600 7.400"><path d="M1.900 5.600V1.600M.5 2.900 1.900 1.100 3.300 2.900" fill="none" stroke="#fff" stroke-width="1.050"/><path d="M5.500 1.800V6M4.100 4.700 5.500 6.500 6.900 4.700" fill="none" stroke="#fff" stroke-width="1.050"/></svg><svg class="abs" style="left:761.20px;top:1.40px;" width="7.60" height="7.60" viewBox="0 0 10 10"><circle cx="5" cy="5" r="2.400" fill="none" stroke="#fff" stroke-width="1.300"/><path d="M5 .4v1.800M5 7.800v1.800M.4 5h1.800M7.800 5h1.800M1.700 1.700l1.300 1.300M7 7l1.300 1.300M1.700 8.300 3 7M7 3l1.300-1.300" stroke="#fff" stroke-width="1.100"/></svg><span id="t82" class="abs " style="left:772.00px;top:2.29px;font-size:5.40px;line-height:7.02px;height:7.02px;color:#c3c9cc;letter-spacing:-0.125px;">18:51</span><svg class="abs" style="left:787.80px;top:2.00px;" width="8.00" height="6.50" viewBox="0 0 8 6.500"><path d="M.3 2.300h1.500L3.800.600v5.300L1.800 4.200H.3Z" fill="#75818a"/><path d="M4.800 1.800c.7.800.7 2.100 0 2.900M5.900.900c1.300 1.400 1.300 3.300 0 4.700M7 .200c1.700 1.800 1.700 4.300 0 6.100" fill="none" stroke="#6b7780" stroke-width=".5"/></svg><div class="abs " style="left:799.20px;top:1.20px;width:8.60px;height:8.20px;background:#6c6f70"></div><span id="t83" class="abs " style="left:801.10px;top:2.54px;font-size:4.70px;line-height:6.11px;height:6.11px;color:#44484a;">Es</span><span id="t84" class="abs " style="left:813.90px;top:2.16px;font-size:5.60px;line-height:7.28px;height:7.28px;color:#ccd2d5;letter-spacing:-0.117px;">05 nov, 18:51</span></div>
<div class="abs " style="left:0.00px;top:455.00px;width:848.00px;height:22.00px;background:#242424;border-top:.8px solid #161616"></div><svg class="abs" style="left:374.90px;top:457.70px;" width="14.00" height="17.40" viewBox="0 0 14 17.4"><rect x=".4" y=".4" width="13.200" height="16.600" rx="1.300" fill="#8f8f8f" stroke="#d2d2d2" stroke-width=".8"/><rect x="1.700" y="1.800" width="10.600" height="3.300" fill="#6f7572"/><path d="M6.500 2.600h1.400v1.700H6.500ZM8.500 2.600h1.400v1.700H8.500ZM10.400 2.600h1.300v1.700h-1.300Z" fill="#c9cfcb"/><rect x="1.70" y="6.10" width="2.100" height="1.700" fill="#5e5e5e"/><rect x="4.53" y="6.10" width="2.100" height="1.700" fill="#5e5e5e"/><rect x="7.36" y="6.10" width="2.100" height="1.700" fill="#5e5e5e"/><rect x="10.19" y="6.10" width="2.100" height="1.700" fill="#5e5e5e"/><rect x="1.70" y="8.25" width="2.100" height="1.700" fill="#5e5e5e"/><rect x="4.53" y="8.25" width="2.100" height="1.700" fill="#5e5e5e"/><rect x="7.36" y="8.25" width="2.100" height="1.700" fill="#5e5e5e"/><rect x="10.19" y="8.25" width="2.100" height="1.700" fill="#5e5e5e"/><rect x="1.70" y="10.40" width="2.100" height="1.700" fill="#5e5e5e"/><rect x="4.53" y="10.40" width="2.100" height="1.700" fill="#5e5e5e"/><rect x="7.36" y="10.40" width="2.100" height="1.700" fill="#5e5e5e"/><rect x="10.19" y="10.40" width="2.100" height="1.700" fill="#5e5e5e"/><rect x="1.70" y="12.55" width="2.100" height="1.700" fill="#5e5e5e"/><rect x="4.53" y="12.55" width="2.100" height="1.700" fill="#5e5e5e"/><rect x="7.36" y="12.55" width="2.100" height="1.700" fill="#5e5e5e"/><rect x="10.19" y="12.55" width="2.100" height="1.700" fill="#5e5e5e"/><rect x="1.70" y="14.70" width="2.100" height="1.700" fill="#5e5e5e"/><rect x="4.53" y="14.70" width="2.100" height="1.700" fill="#5e5e5e"/><rect x="7.36" y="14.70" width="2.100" height="1.700" fill="#5e5e5e"/><rect x="10.19" y="14.70" width="2.100" height="1.700" fill="#5e5e5e"/></svg><svg class="abs" style="left:392.80px;top:456.20px;" width="19.50" height="20.50" viewBox="0 0 19.5 20.5"><path d="M.3 .4C2.400 .2 4.800 1.600 6 4.200L4.600 5.400C2.600 4.800 .9 3 .3 .4Z" fill="#f39a1c"/><path d="M1.800 1.200C3.200 1.600 4.500 2.700 5.200 4.200L4.500 4.800C3.300 4 2.300 2.700 1.800 1.200Z" fill="#ffd65a"/><path d="M4.600 5.400 6 4.200 8.200 6.400 6.800 7.700Z" fill="#b9b9b9"/><path d="M6.800 7.700 8.200 6.400C12.500 9 17.200 13.600 19 16.400c.5.800-.3 1.600-1.100 1.200C14.600 15.800 9.900 11.400 6.800 7.700Z" fill="#e3c9a6"/><path d="M8.200 6.400C12.500 9 17.200 13.600 19 16.400 15.600 13.200 11.800 10 7.500 7Z" fill="#b98d5e"/><path d="M2.30 13.600c1.500 2 2.200 3.200 2.200 4.200a2.200 2.200 0 0 1-4.400 0c0-1 .7-2.200 2.200-4.200Z" fill="#1fae2a"/><circle cx="1.80" cy="17.300" r=".8" fill="#8be28f"/><path d="M7.70 13.600c1.500 2 2.200 3.200 2.200 4.200a2.200 2.200 0 0 1-4.400 0c0-1 .7-2.200 2.200-4.200Z" fill="#2a7be0"/><circle cx="7.20" cy="17.300" r=".8" fill="#a9cff5"/><path d="M12.70 13.600c1.500 2 2.200 3.200 2.200 4.200a2.200 2.200 0 0 1-4.400 0c0-1 .7-2.200 2.200-4.200Z" fill="#d02a22"/><circle cx="12.20" cy="17.300" r=".8" fill="#f08a80"/></svg><svg class="abs" style="left:416.70px;top:457.70px;" width="17.00" height="17.40" viewBox="0 0 17 17.4"><rect x=".4" y=".4" width="13.800" height="16.600" fill="#e9e9e9" stroke="#bdbdbd" stroke-width=".6"/><path d="M2.300 3.200h9.600M2.300 5.200h9.600M2.300 7.200h9.600M2.300 9.200h7M2.300 11.200h5M2.300 13.200h3" stroke="#c4c4c4" stroke-width=".6"/><path d="M14.700 5.600 7.300 12.400 6.400 14.300 8.400 13.700 15.800 6.800Z" fill="#2e2e2e"/><path d="M14.700 5.600 15.800 6.800 16.500 6.100 15.400 4.900Z" fill="#ee7ac0"/><path d="M6.400 14.300 6.900 13 7.800 13.900Z" fill="#f5c86a"/></svg><svg class="abs" style="left:435.80px;top:456.80px;" width="18.60" height="18.60" viewBox="0 0 20 20"><defs><radialGradient id="fgd" cx=".62" cy=".45" r=".75"><stop offset="0" stop-color="#ffd23c"/><stop offset=".45" stop-color="#f59a1e"/><stop offset="1" stop-color="#d9481a"/></radialGradient><linearGradient id="fbd" x1="0" y1="0" x2="0" y2="1"><stop offset="0" stop-color="#4a93e0"/><stop offset="1" stop-color="#1f4f9e"/></linearGradient></defs><circle cx="10" cy="10" r="9.4" fill="url(#fgd)"/><circle cx="10.7" cy="8" r="6.4" fill="url(#fbd)"/><path d="M1 8.200C1.200 6.200 2 4.500 3.200 3.300L3.600 5.100C4.500 4.200 5.600 3.800 6.700 3.900L6.100 5.400C7.300 5.300 8.300 5.700 9 6.500C7.900 6.800 7.300 7.400 7.200 8.200C7.100 9.300 8 10.100 9.300 10.300C10.900 10.500 12.200 10 13.100 9C13 11.400 11.100 13.200 8.600 13.300C6.900 13.400 5.400 12.700 4.400 11.600C3 12 1.800 11.400 1.300 10.300C1.100 9.600 1 8.900 1 8.200Z" fill="#e8641b"/><path d="M3.200 3.300 3.600 5.100C4.500 4.200 5.600 3.800 6.700 3.900L6.100 5.400C5 5.500 4 6 3.300 6.800C3 5.600 3 4.400 3.200 3.300Z" fill="#f7a823"/></svg><svg class="abs" style="left:458.80px;top:458.80px;" width="15.80" height="16.40" viewBox="0 0 15.8 16.4"><rect x=".5" y=".5" width="14.600" height="15.200" rx=".8" fill="#262626" stroke="#5c5c5c" stroke-width=".9"/></svg><span id="t85" class="abs " style="left:460.80px;top:460.66px;font-size:5.60px;line-height:7.28px;height:7.28px;color:#fff;font-family:'DejaVu Sans Mono','Liberation Mono',monospace;font-weight:bold;">$</span><div class="abs " style="left:464.60px;top:467.20px;width:3.40px;height:0.90px;background:#f2f2f2"></div>
</body>
</html>
